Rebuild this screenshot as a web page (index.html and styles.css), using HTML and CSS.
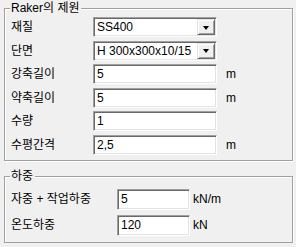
FILE: index.html
```html
<!DOCTYPE html>
<html lang="ko">
<head>
    <meta charset="UTF-8">
    <title>Raker의 제원</title>
    <link rel="stylesheet" href="styles.css">
</head>
<body>
    <div class="group group-raker">
        <div class="group-title">Raker의 제원</div>
        <div class="rows">
            <div class="label">재질</div>
            <div class="field combo"><span class="value">SS400</span><span class="arrow"></span></div>
            <div class="unit"></div>

            <div class="label">단면</div>
            <div class="field combo"><span class="value">H 300x300x10/15</span><span class="arrow"></span></div>
            <div class="unit"></div>

            <div class="label">강축길이</div>
            <div class="field"><span class="value">5</span></div>
            <div class="unit">m</div>

            <div class="label">약축길이</div>
            <div class="field"><span class="value">5</span></div>
            <div class="unit">m</div>

            <div class="label">수량</div>
            <div class="field"><span class="value">1</span></div>
            <div class="unit"></div>

            <div class="label">수평간격</div>
            <div class="field"><span class="value">2,5</span></div>
            <div class="unit">m</div>
        </div>
    </div>

    <div class="group group-load">
        <div class="group-title">하중</div>
        <div class="rows">
            <div class="label">자중 + 작업하중</div>
            <div class="field"><span class="value">5</span></div>
            <div class="unit">kN/m</div>

            <div class="label">온도하중</div>
            <div class="field"><span class="value">120</span></div>
            <div class="unit">kN</div>
        </div>
    </div>
</body>
</html>
```

FILE: styles.css
```css
body {
    margin: 0;
    padding-top: 8px;
    background-color: #f0f0f0;
    font-family: "Liberation Sans", "Noto Sans CJK KR", sans-serif;
    font-size: 12px;
    line-height: 14px;
    color: #000;
}
.group {
    margin-left: 4px;
    width: 287px;
    border: 1px solid #a0a0a0;
    box-shadow: inset 1px 1px 0 #fff, 1px 1px 0 #fff;
}
.group-raker {
    padding-bottom: 5px;
}
.group-load {
    margin-top: 15px;
    padding-bottom: 6px;
}
.group-title {
    width: max-content;
    background-color: #f0f0f0;
    margin: -8px 0 0 5px;
    padding: 0 2px 0 1px;
    height: 14px;
}
.rows {
    display: grid;
    align-items: center;
    padding-left: 6px;
}
.group-raker .rows {
    grid-template-columns: 82px 124px auto;
    row-gap: 3.5px;
    margin-top: 2px;
}
.group-raker .field {
    height: 20px;
}
.group-load .rows {
    grid-template-columns: 106px 73px auto;
    row-gap: 5px;
    margin-top: 6px;
}
.group-load .field {
    height: 21px;
}
.label {
    white-space: nowrap;
}
.field {
    box-sizing: border-box;
    background-color: #fff;
    border-top: 1px solid #a0a0a0;
    border-left: 1px solid #a0a0a0;
    border-right: 1px solid #fff;
    border-bottom: 1px solid #fff;
    box-shadow: inset 1px 1px 0 #696969, inset -1px -1px 0 #e3e3e3;
    display: flex;
    align-items: center;
    padding: 0 2px 0 3px;
}
.value {
    flex: 1;
    white-space: nowrap;
    overflow: hidden;
}
.arrow {
    box-sizing: border-box;
    width: 18px;
    height: 16px;
    margin-right: -1px;
    background-color: #f0f0f0;
    border-top: 1px solid #e3e3e3;
    border-left: 1px solid #e3e3e3;
    border-right: 1px solid #696969;
    border-bottom: 1px solid #696969;
    box-shadow: inset 1px 1px 0 #fff, inset -1px -1px 0 #a0a0a0;
    display: flex;
    align-items: center;
    justify-content: center;
}
.arrow::after {
    content: "";
    border-left: 3.5px solid transparent;
    border-right: 3.5px solid transparent;
    border-top: 4px solid #000;
    margin-top: 1px;
}
.unit {
    padding-left: 9px;
}
.group-load .unit {
    padding-left: 3px;
}
```
